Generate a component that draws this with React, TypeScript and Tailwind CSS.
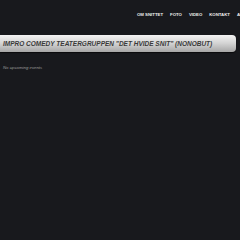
const navItems = ['OM SNITTET', 'FOTO', 'VIDEO', 'KONTAKT', 'ARKIV'];

export default function App() {
  return (
    <div className="min-h-[240px] w-[240px] overflow-hidden bg-[#18191d] font-['Liberation_Sans',Arial,sans-serif]">
      {/* header */}
      <div className="flex h-[30px] items-center whitespace-nowrap pl-[137px]">
        <nav className="flex gap-[7px] text-[4.3px] font-bold text-[#ececec]">
          {navItems.map((item) => (
            <span key={item}>{item}</span>
          ))}
        </nav>
      </div>

      {/* title bar */}
      <div className="mt-[5px] mr-[4px] flex h-[17px] items-center rounded-r-[4px] bg-gradient-to-b from-[#f4f4f4] via-[#d2d2d2] to-[#a6a6a6] pl-[3px] shadow-[0_1px_1px_rgba(0,0,0,0.6)]">
        <h1 className="whitespace-nowrap text-[6.5px] font-bold italic text-[#3a3a3a]">
          IMPRO COMEDY TEATERGRUPPEN "DET HVIDE SNIT" (NONOBUT)
        </h1>
      </div>

      <p className="mt-[13px] pl-[3px] text-[4.3px] italic text-[#9a9a9a]">No upcoming events</p>
    </div>
  );
}
